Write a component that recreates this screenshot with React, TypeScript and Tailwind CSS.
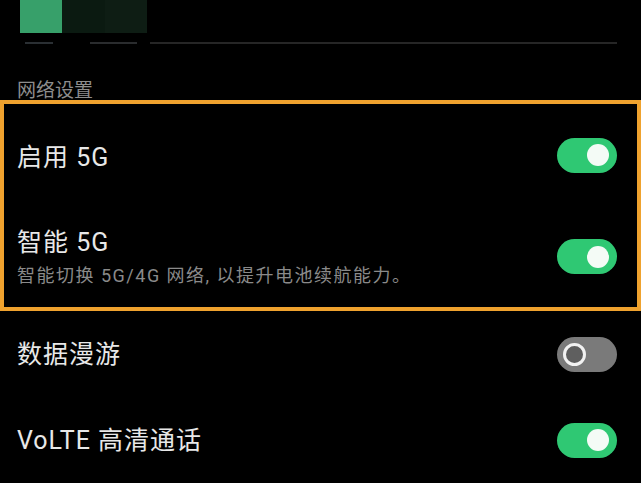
import { useState } from "react";

type ToggleProps = { on: boolean; onChange: () => void };

function Toggle({ on, onChange }: ToggleProps) {
  if (on) {
    return (
      <button
        onClick={onChange}
        className="w-[60px] h-[35px] rounded-full bg-[#2fc873] flex items-center justify-end pr-[8px] shrink-0"
      >
        <span className="w-[22px] h-[22px] rounded-full bg-[#f4fbf6]" />
      </button>
    );
  }
  return (
    <button
      onClick={onChange}
      className="w-[60px] h-[35px] rounded-full bg-[#7a7a7a] flex items-center justify-start pl-[6px] shrink-0"
    >
      <span className="w-[23px] h-[23px] rounded-full border-[3px] border-[#f2f2f2] bg-[#5f5f5f]" />
    </button>
  );
}

export default function App() {
  const [enable5g, setEnable5g] = useState(true);
  const [smart5g, setSmart5g] = useState(true);
  const [roaming, setRoaming] = useState(false);
  const [volte, setVolte] = useState(true);

  return (
    <div
      className="w-[641px] h-[483px] bg-black overflow-hidden text-[#e8e8e8]"
      style={{ fontFamily: 'Roboto, "Noto Sans CJK SC", sans-serif' }}
    >
      {/* top tabs, partly cut off */}
      <div className="h-[100px] flex flex-col">
        <div className="flex h-[33px] pl-[20px]">
          <div className="w-[42px] bg-[#37a06a]" />
          <div className="w-[43px] bg-[#0b1a11]" />
          <div className="w-[42px] bg-[#0e1d14]" />
        </div>
        <div className="flex mt-[9px] h-[2px]">
          <div className="ml-[25px] w-[28px] bg-[#2a2f33]" />
          <div className="ml-[37px] w-[47px] bg-[#2a2c2e]" />
          <div className="ml-[13px] w-[467px] bg-[#262626]" />
        </div>
        <div className="mt-[37px] pl-[17px] text-[19px] leading-[19px] text-[#8d8d8d]">网络设置</div>
      </div>

      {/* highlighted group */}
      <div className="h-[211px] border-4 border-[#efa22e] flex flex-col">
        <div className="h-[102px] flex items-center justify-between pl-[13px] pr-[20px]">
          <span className="text-[25px] leading-none mt-[5px] tracking-[1px]">启用 5G</span>
          <Toggle on={enable5g} onChange={() => setEnable5g(!enable5g)} />
        </div>
        <div className="h-[101px] flex items-center justify-between pl-[13px] pr-[20px]">
          <div className="flex flex-col mt-[2px]">
            <span className="text-[25px] leading-none tracking-[1px]">智能 5G</span>
            <span className="text-[18px] leading-none mt-[12px] tracking-[1.5px] text-[#8a8a8a]">
              智能切换 5G/4G 网络, 以提升电池续航能力。
            </span>
          </div>
          <Toggle on={smart5g} onChange={() => setSmart5g(!smart5g)} />
        </div>
      </div>

      <div className="h-[86px] flex items-center justify-between pl-[17px] pr-[24px]">
        <span className="text-[25px] leading-none tracking-[1px]">数据漫游</span>
        <Toggle on={roaming} onChange={() => setRoaming(!roaming)} />
      </div>
      <div className="h-[86px] flex items-center justify-between pl-[17px] pr-[24px]">
        <span className="text-[25px] leading-none tracking-[1px]">VoLTE 高清通话</span>
        <Toggle on={volte} onChange={() => setVolte(!volte)} />
      </div>
    </div>
  );
}
